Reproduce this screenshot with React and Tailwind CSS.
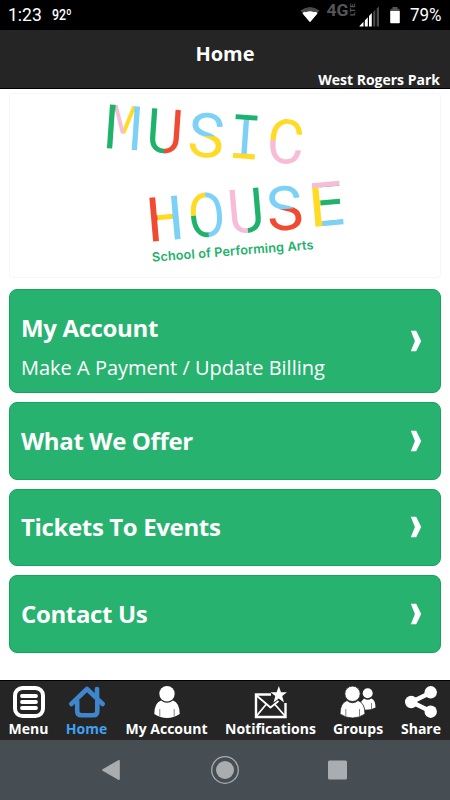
import React from "react";

const GREEN = "#1fb26b";
const BLUE = "#7dd1f7";
const YELLOW = "#ffdb25";
const RED = "#f04a32";
const PINK = "#f7bdd8";

const MONO = "font-['DejaVu_Sans_Mono',monospace] text-[60px]";
const SANS = "font-['Roboto',sans-serif] text-[61.5px]";

// Each letter is set on its own baseline; bands are [x, y, width, height, colour] around that origin.
const LETTERS = [
  { id: "m1", ch: "M", font: MONO, x: 122, y: 149.2, r: 4, sx: 0.97, bands: [[-30, -60, 20.2, 80, GREEN], [-9.8, -60, 9.8, 80, PINK], [0, -60, 9.7, 80, YELLOW], [9.7, -60, 20.3, 80, BLUE]] },
  { id: "u1", ch: "U", font: SANS, x: 163.3, y: 152.8, r: 4, sx: 0.91, bands: [[-30, -60, 30, 80, GREEN], [0, -60, 30, 80, RED]] },
  { id: "s1", ch: "S", font: SANS, x: 204.7, y: 157, r: 4, sx: 1, bands: [[-30, -60, 60, 36, BLUE], [-30, -24, 38, 3, BLUE], [8, -24, 30, 3, YELLOW], [-30, -21, 60, 41, YELLOW]] },
  { id: "i1", ch: "I", font: MONO, x: 243.7, y: 158.7, r: 4, sx: 0.9, bands: [[-30, -60, 60, 21.3, GREEN], [-30, -38.7, 60, 33.7, BLUE], [-30, -5, 60, 20, YELLOW]] },
  { id: "c1", ch: "C", font: SANS, x: 284, y: 163.2, r: 4, sx: 0.93, bands: [[-30, -60, 60, 38, YELLOW], [-30, -22, 60, 42, PINK]] },
  { id: "h2", ch: "H", font: MONO, x: 167, y: 240.3, r: -5, sx: 0.98, bands: [[-30, -60, 22, 80, RED], [-8, -60, 16, 80, YELLOW], [8, -60, 22, 80, BLUE]] },
  { id: "o2", ch: "O", font: SANS, x: 208.3, y: 236.7, r: -5, sx: 0.88, bands: [[-30, -60, 30, 38, YELLOW], [-30, -22, 30, 42, GREEN], [0, -60, 30, 80, BLUE]] },
  { id: "u2", ch: "U", font: SANS, x: 247.6, y: 232.5, r: -5, sx: 0.91, bands: [[-30, -60, 30, 80, PINK], [0, -60, 30, 80, GREEN]] },
  { id: "s2", ch: "S", font: SANS, x: 286.5, y: 230, r: -5, sx: 1, bands: [[-30, -60, 60, 36, BLUE], [-30, -24, 38, 3, BLUE], [8, -24, 30, 3, RED], [-30, -21, 60, 41, RED]] },
  { id: "e2", ch: "E", font: MONO, x: 328.5, y: 225.7, r: -5, sx: 1.06, bands: [[-30, -60, 24, 80, YELLOW], [-30, -60, 60, 21.3, PINK], [-6, -38.7, 36, 33.7, GREEN], [-6, -5.1, 36, 25, BLUE]] },
];

function Logo() {
  return (
    <svg width="430" height="183" viewBox="10 94 430 183" className="block overflow-visible">
      <defs>
        {LETTERS.map((l) => (
          <pattern key={l.id} id={l.id} patternUnits="userSpaceOnUse" x="-30" y="-60" width="60" height="80" viewBox="-30 -60 60 80">
            {l.bands.map(([x, y, w, h, c], i) => (
              <rect key={i} x={x} y={y} width={w} height={h} fill={c} shapeRendering="crispEdges" />
            ))}
          </pattern>
        ))}
      </defs>
      {LETTERS.map((l) => (
        <text
          key={l.id}
          transform={`translate(${l.x} ${l.y}) rotate(${l.r}) scale(${l.sx} 1)`}
          textAnchor="middle"
          fill={`url(#${l.id})`}
          className={l.font}
        >
          {l.ch}
        </text>
      ))}
      <text
        transform="translate(152.3 261.8) rotate(-4.5)"
        textLength="162"
        fill={GREEN}
        className="font-['Inter',sans-serif] text-[12.8px] font-semibold"
      >
        School of Performing Arts
      </text>
    </svg>
  );
}

function StatusBar() {
  return (
    <div className="flex h-[30px] items-center bg-black pl-2 pr-[7px] font-['Roboto',sans-serif] text-white">
      <span className="w-[44px] text-[17.5px] leading-[32px]">1:23</span>
      <span className="text-[15.5px] font-medium leading-[32px]">
        <span className="inline-block w-[24px] origin-left scale-x-[0.8]">92º</span>
      </span>
      <svg width="84" height="30" viewBox="298 0 84 30" className="ml-auto">
        <path d="M300.500 10.500Q310 3.500 319.500 10.500L310 22Z" fill="#4a4a4a" />
        <path d="M302.500 13.500Q304 11 306 12.300Q310 10 314 12.300Q316 11 317.500 13.500L310 22.300Z" fill="#fff" />
        <text x="326.500" y="15.500" textLength="22" lengthAdjust="spacingAndGlyphs" fill="#555" className="font-['Roboto',sans-serif] text-[16px] font-bold">4G</text>
        <text transform="translate(355 16) rotate(-90)" textLength="12.500" lengthAdjust="spacingAndGlyphs" fill="#555" className="font-['Roboto',sans-serif] text-[8px] font-bold">LTE</text>
        <path d="M359.500 26.500V26L363.500 21.800V26.500ZM364.800 26.500V20.500L367.800 17.300V26.500ZM369 26.500V16L371.800 13V26.500Z" fill="#fff" />
        <path d="M373.200 26.500V12L375.300 9.800V26.500ZM376.700 26.500V8.500L379 6.500V26.500Z" fill="#4a4a4a" />
      </svg>
      <svg width="12" height="20" viewBox="0 0 12 20" className="ml-[7px] mr-[9px]">
        <path d="M3.500 2H8.500V3.800H10.500V6H1.500V3.800H3.500Z" fill="#555" />
        <path d="M1.200 6H10.800V17.500Q10.800 18.300 10 18.300H2Q1.200 18.300 1.200 17.500Z" fill="#fff" />
      </svg>
      <span className="w-[33px] text-[17.5px] leading-[32px]">
        <span className="inline-block origin-left scale-x-[0.97]">79%</span>
      </span>
    </div>
  );
}

function Header() {
  return (
    <header className="h-[59px] border-b border-black bg-[#252525] text-white">
      <h1 className="pt-[10px] text-center text-[20px] font-bold leading-[28px]">Home</h1>
      <p className="mt-[3px] pr-[10px] text-right text-[14px] font-bold leading-[18px]">West Rogers Park</p>
    </header>
  );
}

function LinkCard({ title, subtitle }) {
  return (
    <button className={`flex w-full shrink-0 items-center justify-between rounded-lg border border-[#12a65c] bg-[#27b270] pl-[11px] pr-[18px] text-left text-white ${subtitle ? "h-[104px]" : "h-[77.6px]"}`}>
      <span className={`flex flex-col ${subtitle ? "pt-3" : ""}`}>
        <span className="text-[24px] font-bold leading-[40px] tracking-[-0.36px]">{title}</span>
        {subtitle && <span className="text-[20px] leading-[39px]">{subtitle}</span>}
      </span>
      <svg width="12" height="22" viewBox="0 0 12 22">
        <path d="M0.800 0.700H6.200L11.200 11L6.200 21.300H0.800L4.900 11Z" fill="#fff" />
      </svg>
    </button>
  );
}

const MenuIcon = () => (
  <svg width="34" height="34" viewBox="0 0 34 34" fill="none" stroke="#fff" strokeLinecap="round">
    <rect x="3" y="3" width="28" height="28" rx="7.500" strokeWidth="4" />
    <path d="M10 11H24M10 17H24M10 23H24" strokeWidth="3.800" />
  </svg>
);

const HomeIcon = () => (
  <svg width="38" height="34" viewBox="0 0 38 34" fill="none" stroke="#3f86cc" strokeWidth="4.600" strokeLinecap="round" strokeLinejoin="round">
    <path d="M3.300 19L19 4L34.700 19" />
    <path d="M9.200 16V26Q9.200 30.300 13.500 30.300H25Q29.300 30.300 29.300 26V16" />
    <path d="M29 4V12" />
  </svg>
);

const PersonIcon = () => (
  <svg width="28" height="34" viewBox="0 0 28 34">
    <circle cx="14" cy="8.800" r="7.700" fill="#fff" />
    <path d="M8 15.500Q14 20 20 15.500Q26.700 18 26.700 29Q20.500 33 14 33Q7.500 33 1.300 29Q1.300 18 8 15.500Z" fill="#fff" />
    <path d="M6.800 24V31.500M21.200 24V31.500" stroke="#777" strokeWidth="0.900" />
  </svg>
);

const MailIcon = () => (
  <svg width="34" height="34" viewBox="0 0 34 34" fill="none" stroke="#fff">
    <path d="M17 9.500H2V32H31.500V18" strokeWidth="2.400" />
    <path d="M2.500 10.500L16.500 22.500L24.500 16M2.500 31L12 19.500M31 31L21 19.500" strokeWidth="1.800" />
    <path d="M24.800 1L27 7.200H33L28.200 11L30 17.500L24.800 13.600L19.500 17.500L21.300 11L16.500 7.200H22.600Z" fill="#fff" stroke="none" />
  </svg>
);

const GroupIcon = () => (
  <svg width="38" height="34" viewBox="0 0 38 34">
    <circle cx="28.700" cy="8.300" r="5" fill="#fff" />
    <path d="M25 13.500Q28.700 16 32.500 13.500Q36.500 15 36.500 22.500Q32 25 26 24.800L22 17Z" fill="#fff" />
    <path d="M32.500 18V24.300" stroke="#777" strokeWidth="0.900" />
    <circle cx="13.500" cy="8.800" r="7.700" fill="#fff" stroke="#252525" strokeWidth="0.800" />
    <path d="M8 15.500Q13.500 20 19 15.500Q26 18 26 29Q20 33 13.500 33Q7 33 1 29Q1 18 8 15.500Z" fill="#fff" stroke="#252525" strokeWidth="0.800" />
    <path d="M6.800 24V31.500M20.500 24V31.500" stroke="#777" strokeWidth="0.900" />
  </svg>
);

const ShareIcon = () => (
  <svg width="34" height="34" viewBox="0 0 34 34" fill="#fff">
    <path d="M27 7.500L7.500 17L27 26.500" fill="none" stroke="#fff" strokeWidth="4.500" />
    <circle cx="26.700" cy="7.300" r="6.200" />
    <circle cx="7.200" cy="17" r="6.200" />
    <circle cx="26.700" cy="26.700" r="6.200" />
  </svg>
);

const TABS = [
  { label: "Menu", Icon: MenuIcon, width: "w-[57px]" },
  { label: "Home", Icon: HomeIcon, width: "w-[59px]", active: true },
  { label: "My Account", Icon: PersonIcon, width: "w-[101px]" },
  { label: "Notifications", Icon: MailIcon, width: "w-[107px]" },
  { label: "Groups", Icon: GroupIcon, width: "w-[68px]" },
  { label: "Share", Icon: ShareIcon, width: "w-[58px]" },
];

function TabBar() {
  return (
    <nav className="flex h-[60px] border-t border-black bg-[#252525]">
      {TABS.map(({ label, Icon, width, active }) => (
        <div key={label} className={`flex shrink-0 flex-col items-center pt-1 ${width}`}>
          <Icon />
          <span className={`whitespace-nowrap text-[14px] font-bold leading-[20px] ${active ? "text-[#3fa2f3]" : "text-white"}`}>{label}</span>
        </div>
      ))}
    </nav>
  );
}

function SystemNav() {
  return (
    <div className="flex h-[60px] items-center bg-[#464e53]">
      <svg width="450" height="60" viewBox="0 0 450 60" fill="#a9adb0">
        <path d="M102.600 29.300L118.200 20.200Q119.800 19.500 119.800 21V39Q119.800 40.500 118.200 39.800L102.600 30.700Q101.600 30 102.600 29.300Z" />
        <circle cx="225" cy="30" r="9" />
        <circle cx="225" cy="30" r="13.300" fill="none" stroke="#a9adb0" strokeWidth="1.300" />
        <rect x="328" y="20.500" width="19" height="19" rx="1.500" />
      </svg>
    </div>
  );
}

export default function App() {
  return (
    <div className="flex h-[800px] w-[450px] flex-col overflow-hidden bg-white font-['Open_Sans',sans-serif]">
      <StatusBar />
      <Header />
      <main className="flex flex-1 flex-col px-[9px] pt-1">
        <div className="h-[185px] rounded border border-[#f5f6fa] bg-white">
          <Logo />
        </div>
        <div className="mt-[11px] flex flex-col gap-[9px]">
          <LinkCard title="My Account" subtitle="Make A Payment / Update Billing" />
          <LinkCard title="What We Offer" />
          <LinkCard title="Tickets To Events" />
          <LinkCard title="Contact Us" />
        </div>
      </main>
      <TabBar />
      <SystemNav />
    </div>
  );
}
